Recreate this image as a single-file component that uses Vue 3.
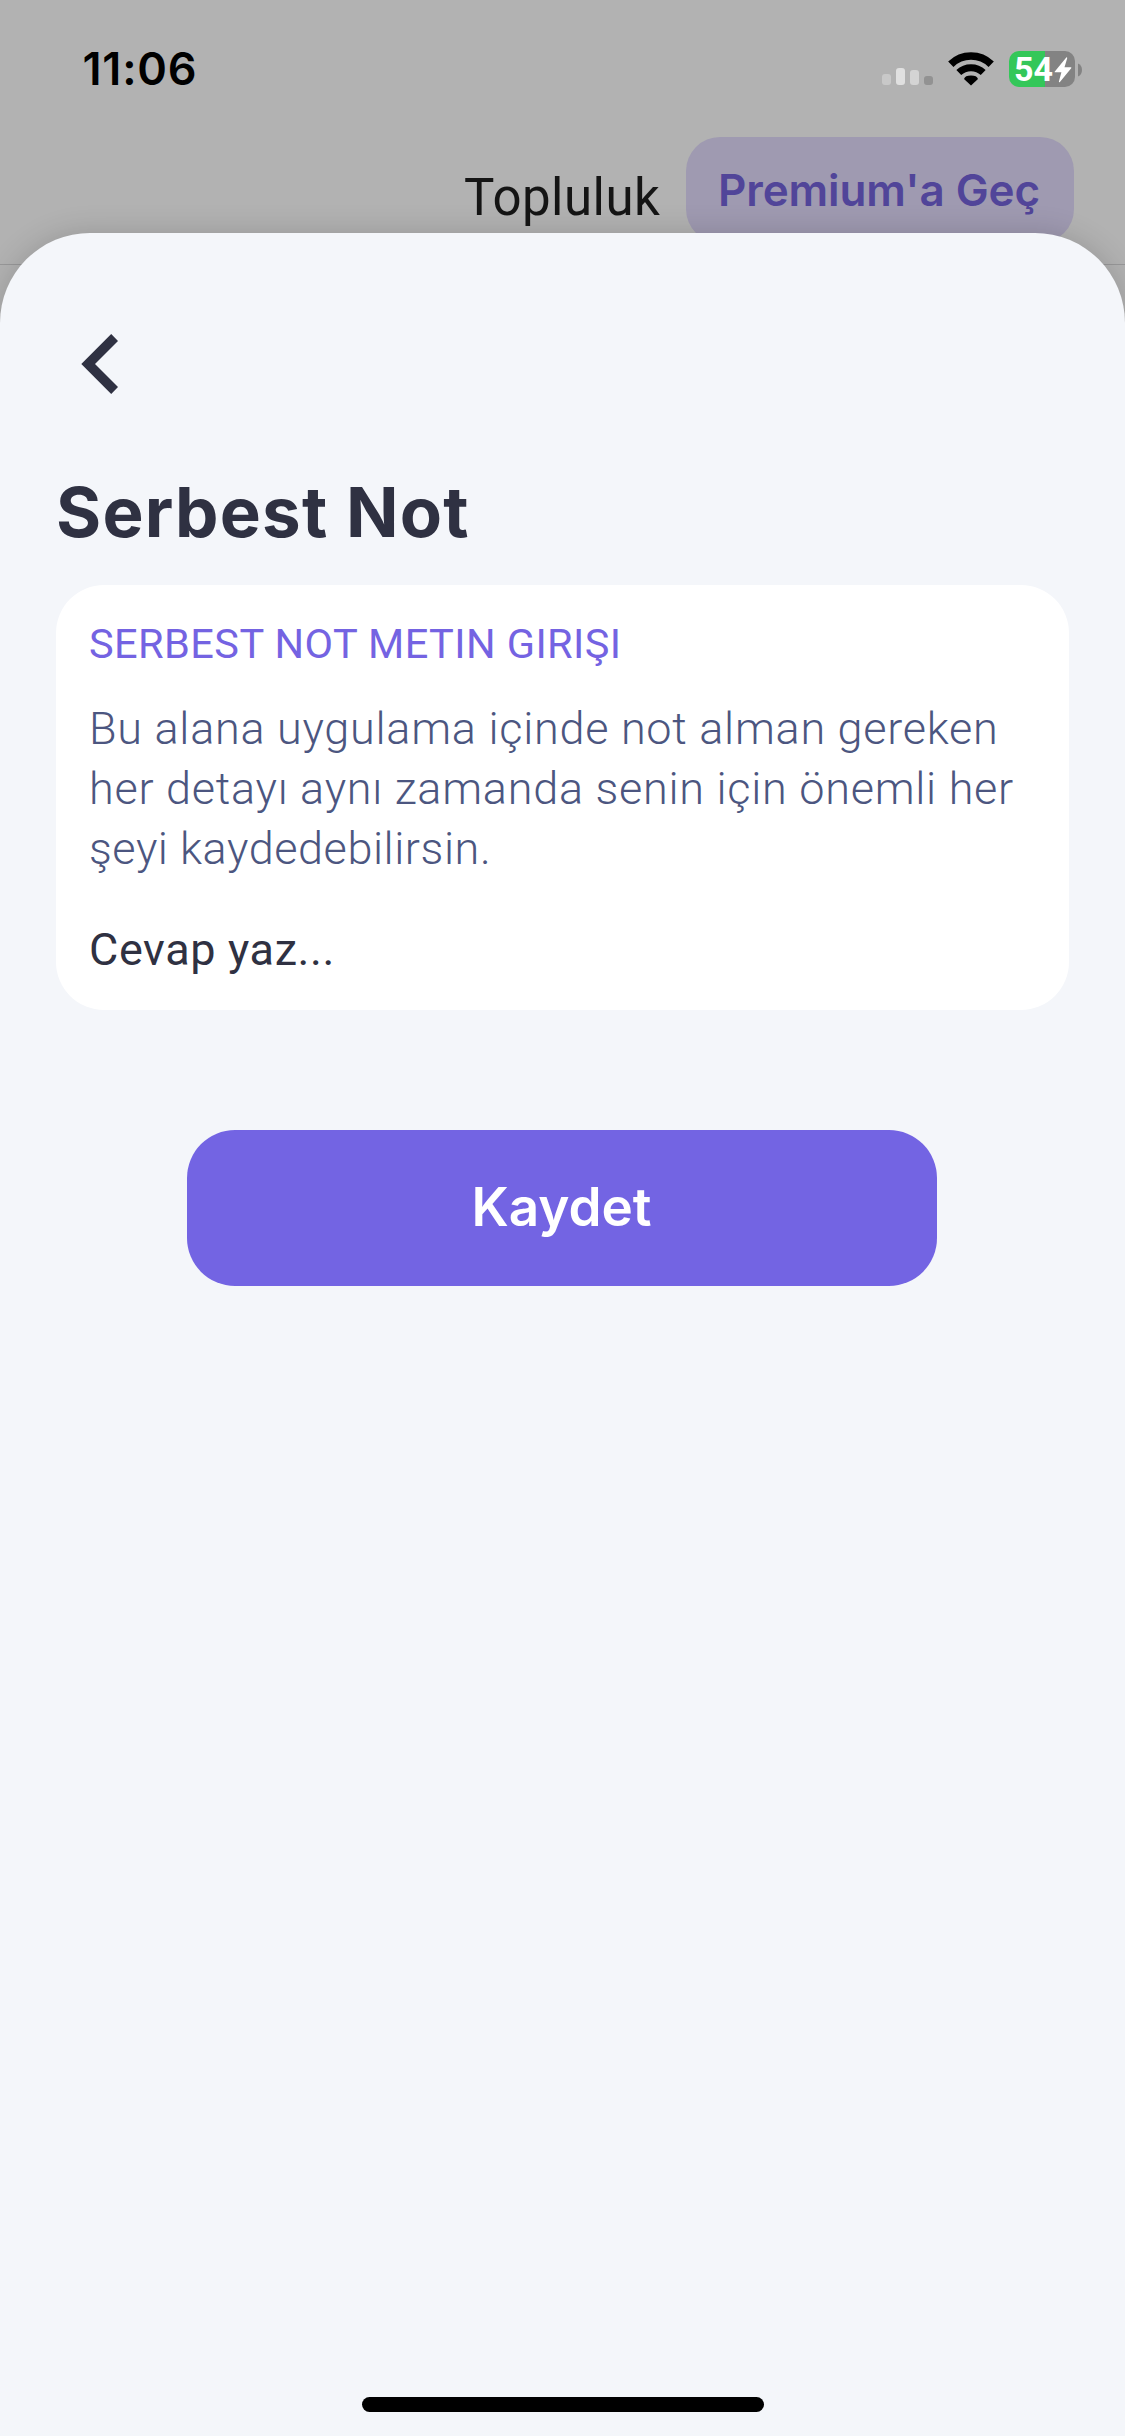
<script setup>
const description = [
  'Bu alana uygulama içinde not alman gereken',
  'her detayı aynı zamanda senin için önemli her',
  'şeyi kaydedebilirsin.'
]
</script>

<template>
  <div class="screen">
    <header class="status">
      <span class="time">11:06</span>
      <div class="indicators">
        <div class="signal"><i></i><i></i><i></i><i></i></div>
        <svg class="wifi" width="46" height="34" viewBox="0 0 46 34">
          <g fill="none" stroke="#000">
            <path d="M2.8 12.2a29 29 0 0 1 40.4 0" stroke-width="7.6" />
            <path d="M10.8 20.6a17.6 17.6 0 0 1 24.4 0" stroke-width="7" />
          </g>
          <path d="M23 33.6 16 26.9q1-3.4 7-3.4t7 3.4z" />
        </svg>
        <div class="battery">
          <span class="level">54</span>
          <svg class="bolt" width="18" height="26" viewBox="0 0 18 26">
            <path d="M12.3.4.8 14.4q-.6.9.5.9h6.1L4.9 24.6q0 1.2 1 .5L17.2 11.2q.6-1-.5-1h-6.2L13.2 1.2q0-1.4-.9-.8z" fill="#fff" />
          </svg>
        </div>
        <svg class="nub" width="5" height="14" viewBox="0 0 5 14"><path d="M0 .5q4 1.6 4 6.5t-4 6.5z" fill="#838383" /></svg>
      </div>
    </header>
    <nav class="nav">
      <span class="community">Topluluk</span>
      <span class="premium">Premium'a Geç</span>
    </nav>

    <main class="sheet">
      <svg class="back" width="38" height="60" viewBox="0 0 38 60">
        <path d="M30.2 0 37 6.9 14 30 37 53 30.2 60 .3 30z" fill="#2f3142" />
      </svg>
      <h1 class="title">Serbest Not</h1>
      <section class="card">
        <h2 class="label">SERBEST NOT METIN GIRIŞI</h2>
        <p class="description">
          <span v-for="line in description" :key="line">{{ line }}</span>
        </p>
        <p class="answer">Cevap yaz...</p>
      </section>
      <button class="save">Kaydet</button>
      <div class="home"></div>
    </main>
  </div>
</template>

<style>
body { margin: 0; }
</style>

<style scoped>
.screen {
  position: relative;
  width: 1125px;
  height: 2436px;
  overflow: hidden;
  background: #b2b2b2;
  font-family: Roboto, "Noto Sans", sans-serif;
}
.status {
  display: flex;
  justify-content: space-between;
  box-sizing: border-box;
  height: 137px;
  padding: 39px 42px 0 82.5px;
}
.time {
  font: 600 45px/60px Inter, sans-serif;
  letter-spacing: 0.8px;
  color: #000;
}
.indicators { display: flex; align-items: flex-start; padding-top: 12px; }
.signal { display: flex; align-items: flex-end; gap: 5px; height: 34px; margin-right: 15px; }
.signal i { width: 9px; border-radius: 3px; }
.signal i:nth-child(1) { height: 11px; background: #c8c8c8; }
.signal i:nth-child(2) { height: 17px; background: #e0e0e0; }
.signal i:nth-child(3) { height: 15px; background: #d4d4d4; }
.signal i:nth-child(4) { height: 9px; background: #929292; }
.wifi { margin: 1px 15px 0 0; }
.battery {
  display: flex;
  align-items: center;
  box-sizing: border-box;
  width: 66px;
  height: 36px;
  padding-left: 5px;
  border-radius: 10px;
  background: linear-gradient(90deg, #34c759 36px, #838383 36px);
}
.level { width: 40px; font-size: 34px; font-weight: 700; line-height: 36px; color: #fff; }
.bolt { margin-top: 1px; }
.nub { margin: 12px 0 0 3px; }
.nav {
  display: flex;
  justify-content: flex-end;
  box-sizing: border-box;
  height: 128px;
  padding-right: 51px;
  border-bottom: 1px solid #989899;
}
.community {
  width: 221.5px;
  padding-top: 31px;
  font-size: 51px;
  line-height: 60px;
  letter-spacing: 0.47px;
  color: #151515;
}
.premium {
  box-sizing: border-box;
  width: 388.5px;
  height: 106px;
  padding: 23px 0 0 32.5px;
  border-radius: 34px;
  background: #9f9ab1;
  font: 600 44px/60px Inter, sans-serif;
  letter-spacing: -0.1px;
  white-space: nowrap;
  color: #514599;
}
.sheet {
  position: absolute;
  top: 233px;
  left: 0;
  display: flex;
  flex-direction: column;
  box-sizing: border-box;
  width: 1125px;
  height: 2203px;
  padding: 101px 56px 24px;
  border-radius: 90px 90px 0 0;
  background: #f4f6fa;
  box-shadow: 0 0 30px rgba(0, 0, 0, 0.16);
}
.back { flex: none; margin-left: 25px; }
.title {
  margin: 76px 0 31px;
  font: 650 69px/84px Inter, sans-serif;
  letter-spacing: 1.2px;
  color: #2f3142;
}
.card {
  box-sizing: border-box;
  height: 425px;
  padding: 34px 33px 0;
  border-radius: 48px;
  background: #fff;
}
.label {
  margin: 0 0 29.5px;
  font-size: 41.5px;
  font-weight: 400;
  line-height: 50px;
  letter-spacing: 0.42px;
  color: #7463e2;
}
.description {
  margin: 0 0 41px;
  font-size: 45px;
  font-weight: 300;
  line-height: 60px;
  letter-spacing: 0.73px;
  white-space: nowrap;
  color: #4c5680;
}
.description span { display: block; }
.description span:last-child { letter-spacing: 0.55px; }
.answer { margin: 0; font-size: 45px; line-height: 60px; letter-spacing: 0.62px; color: #2f3142; }
.save {
  flex: none;
  width: 750px;
  height: 156px;
  margin: 120px 0 0 131px;
  padding: 0 1px 3px 0;
  border: 0;
  border-radius: 48px;
  background: #7364e3;
  font: 600 53px/60px Inter, sans-serif;
  letter-spacing: 0;
  color: #fff;
}
.home { align-self: center; width: 402px; height: 15px; margin-top: auto; border-radius: 8px; background: #000; }
</style>
